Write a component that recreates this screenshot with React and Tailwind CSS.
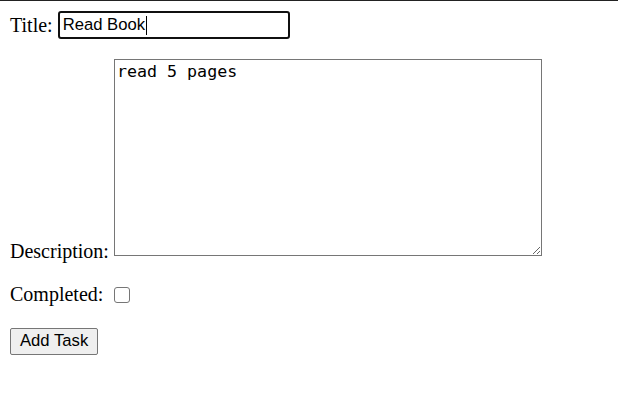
const App = () => {
    return (
        <div className="min-h-[412px] w-full bg-white border-t border-[#222] px-[10px] font-['Liberation_Serif',serif] text-[20px] leading-[23px] text-black">
            <div className="mt-[10px] flex h-[28px] items-center gap-[5px]">
                <span>Title:</span>
                <div className="flex h-[28px] w-[232px] items-center rounded-[3px] border-2 border-[#101010] px-[3px] font-['Liberation_Sans',sans-serif] text-[16.67px] leading-none">
                    <span>Read Book</span>
                    <span className="ml-[1px] h-[19px] w-[1px] bg-black" />
                </div>
            </div>

            <div className="mt-[20px] flex items-end gap-[5px]">
                <span className="mb-[-7px]">Description:</span>
                <textarea
                    defaultValue="read 5 pages"
                    className="h-[197px] w-[428px] resize border border-[#767676] bg-white px-[2px] py-[2px] font-['DejaVu_Sans_Mono',monospace] text-[16.67px] leading-[19px] outline-none"
                />
            </div>

            <div className="mt-[27px] flex items-center">
                <span>Completed:</span>
                <div className="ml-[11px] h-[16px] w-[16px] rounded-[3px] border border-[#767676] bg-white" />
            </div>

            <button className="mt-[22px] h-[27px] rounded-[2px] border border-[#767676] bg-[#efefef] px-[9px] font-['Liberation_Sans',sans-serif] text-[16.67px] leading-none text-black">
                Add Task
            </button>
        </div>
    )
}

export default App
